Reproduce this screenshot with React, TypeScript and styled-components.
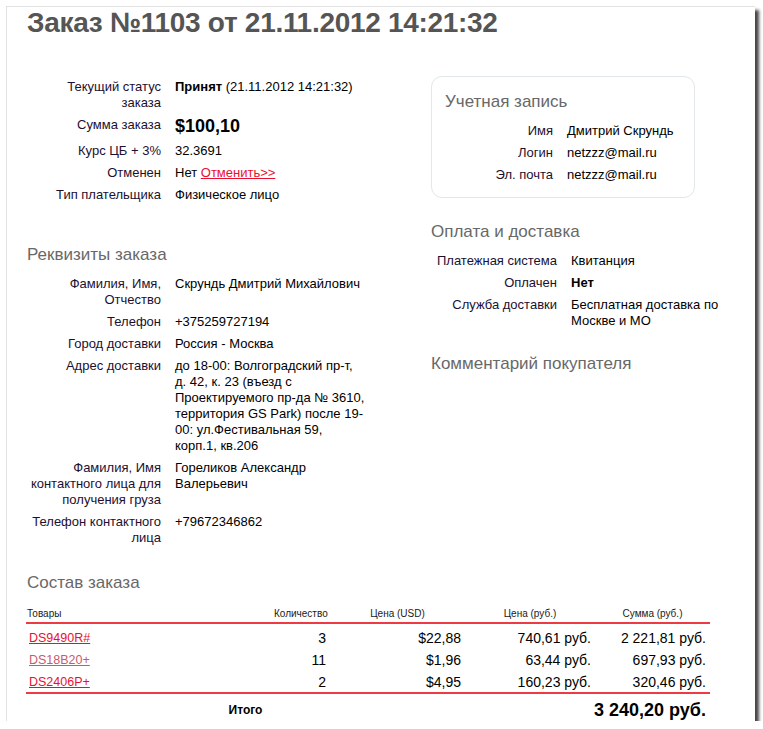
import React from "react";
import styled, { createGlobalStyle } from "styled-components";

const GlobalStyle = createGlobalStyle`
  html, body { margin: 0; padding: 0; background: #fff; }
  body { font-family: "Liberation Sans", Arial, sans-serif; color: #000; }
`;

const Frame = styled.div`
  margin: 6px 0 0 6px;
  width: 749px;
  height: 715px;
  box-sizing: border-box;
  background: #fff;
  border-left: 1px solid #e2e2e2;
  border-top: 1px solid #e2e2e2;
  box-shadow: 4px 4px 3px rgba(0, 0, 0, 0.72);
  padding-left: 20px;
  overflow: hidden;
`;

const PageTitle = styled.h1`
  margin: 0;
  font-size: 28px;
  line-height: 32px;
  font-weight: bold;
  letter-spacing: -0.3px;
  color: #555;
`;

const Columns = styled.div`
  display: grid;
  grid-template-columns: 404px 1fr;
  align-items: start;
  margin-top: 37px;
`;

const Column = styled.div`
  display: flex;
  flex-direction: column;
  align-items: flex-start;
`;

const SectionTitle = styled.h2<{ $top?: number }>`
  margin: ${(p) => p.$top ?? 0}px 0 8px;
  font-size: 17px;
  line-height: 20px;
  font-weight: normal;
  color: #686868;
`;

const InfoList = styled.div<{ $label: number; $value: number; $indent?: number }>`
  display: grid;
  grid-template-columns: ${(p) => p.$label}px ${(p) => p.$value}px;
  column-gap: 14px;
  margin-left: ${(p) => p.$indent ?? 0}px;
  font-size: 13px;
  line-height: 16px;
`;

const Label = styled.div`
  padding: 3px 0;
  text-align: right;
  color: #1c1030;
`;

const Value = styled.div<{ $big?: boolean }>`
  padding: ${(p) => (p.$big ? "3px 0 5px" : "3px 0")};
  color: #000;
  font-size: ${(p) => (p.$big ? "18px" : "inherit")};
  line-height: ${(p) => (p.$big ? "18px" : "inherit")};
  font-weight: ${(p) => (p.$big ? "bold" : "normal")};
`;

const RedLink = styled.a<{ $visited?: boolean }>`
  color: ${(p) => (p.$visited ? "#c75a6e" : "#e8102f")};
  text-decoration: underline;
  cursor: pointer;
`;

const AccountBox = styled.div`
  width: 264px;
  box-sizing: border-box;
  border: 1px solid #e2e7e9;
  border-radius: 11px;
  padding: 15px 14px 11px 13px;
`;

const OrderSection = styled.div`
  margin-top: 24px;
`;

const Table = styled.table`
  margin: 10px 0 0 -1px;
  border-collapse: collapse;
  table-layout: fixed;
  width: 684px;
`;

const HeadCell = styled.th<{ $left?: boolean }>`
  padding: 5px 4px 2px ${(p) => (p.$left ? "1px" : "4px")};
  font-size: 10px;
  line-height: 12px;
  font-weight: normal;
  color: #1a1a1a;
  text-align: ${(p) => (p.$left ? "left" : "center")};
  border-bottom: 2px solid #ee3a43;
`;

const BodyRow = styled.tr`
  &:first-child td { padding-top: 6px; }
  &:last-child td { padding-bottom: 2px; border-bottom: 2px solid #ee3a43; }
`;

const Cell = styled.td<{ $left?: boolean }>`
  padding: 3px 4px 3px ${(p) => (p.$left ? "3px" : "4px")};
  font-size: ${(p) => (p.$left ? "12.5px" : "14px")};
  line-height: 16px;
  text-align: ${(p) => (p.$left ? "left" : "right")};
  color: #000;
  white-space: nowrap;
`;

const TotalLabel = styled.td`
  padding: 6px 4px 0;
  font-size: 12px;
  line-height: 20px;
  font-weight: bold;
  text-align: center;
`;

const TotalValue = styled.td`
  padding: 6px 4px 0;
  font-size: 18px;
  line-height: 20px;
  font-weight: bold;
  text-align: right;
`;

const items = [
  { name: "DS9490R#", qty: "3", usd: "$22,88", rub: "740,61 руб.", sum: "2 221,81 руб.", visited: false },
  { name: "DS18B20+", qty: "11", usd: "$1,96", rub: "63,44 руб.", sum: "697,93 руб.", visited: true },
  { name: "DS2406P+", qty: "2", usd: "$4,95", rub: "160,23 руб.", sum: "320,46 руб.", visited: false },
];

const addressLines = [
  "до 18-00: Волгоградский пр-т,",
  "д. 42, к. 23 (въезд с",
  "Проектируемого пр-да № 3610,",
  "территория GS Park) после 19-",
  "00: ул.Фестивальная 59,",
  "корп.1, кв.206",
];

export default function App() {
  return (
    <>
      <GlobalStyle />
      <Frame>
        <PageTitle>Заказ №1103 от 21.11.2012 14:21:32</PageTitle>
        <Columns>
          <Column>
            <InfoList $label={133} $value={210} $indent={1}>
              <Label>Текущий статус заказа</Label>
              <Value>
                <b>Принят</b> (21.11.2012 14:21:32)
              </Value>
              <Label>Сумма заказа</Label>
              <Value $big>$100,10</Value>
              <Label>Курс ЦБ + 3%</Label>
              <Value>32.3691</Value>
              <Label>Отменен</Label>
              <Value>
                Нет <RedLink>Отменить&gt;&gt;</RedLink>
              </Value>
              <Label>Тип плательщика</Label>
              <Value>Физическое лицо</Value>
            </InfoList>

            <SectionTitle $top={39}>Реквизиты заказа</SectionTitle>
            <InfoList $label={133} $value={210} $indent={1}>
              <Label>Фамилия, Имя, Отчество</Label>
              <Value>Скрундь Дмитрий Михайлович</Value>
              <Label>Телефон</Label>
              <Value>+375259727194</Value>
              <Label>Город доставки</Label>
              <Value>Россия - Москва</Value>
              <Label>Адрес доставки</Label>
              <Value>
                {addressLines.map((line, i) => (
                  <React.Fragment key={i}>
                    {line}
                    {i < addressLines.length - 1 && <br />}
                  </React.Fragment>
                ))}
              </Value>
              <Label>Фамилия, Имя контактного лица для получения груза</Label>
              <Value>
                Гореликов Александр
                <br />
                Валерьевич
              </Value>
              <Label>Телефон контактного лица</Label>
              <Value>+79672346862</Value>
            </InfoList>
          </Column>

          <Column>
            <AccountBox>
              <SectionTitle>Учетная запись</SectionTitle>
              <InfoList $label={108} $value={130}>
                <Label>Имя</Label>
                <Value>Дмитрий Скрундь</Value>
                <Label>Логин</Label>
                <Value>netzzz@mail.ru</Value>
                <Label>Эл. почта</Label>
                <Value>netzzz@mail.ru</Value>
              </InfoList>
            </AccountBox>

            <SectionTitle $top={24}>Оплата и доставка</SectionTitle>
            <InfoList $label={126} $value={165}>
              <Label>Платежная система</Label>
              <Value>Квитанция</Value>
              <Label>Оплачен</Label>
              <Value>
                <b>Нет</b>
              </Value>
              <Label>Служба доставки</Label>
              <Value>Бесплатная доставка по Москве и МО</Value>
            </InfoList>

            <SectionTitle $top={22}>Комментарий покупателя</SectionTitle>
          </Column>
        </Columns>

        <OrderSection>
          <SectionTitle>Состав заказа</SectionTitle>
          <Table>
            <colgroup>
              <col style={{ width: 244 }} />
              <col style={{ width: 60 }} />
              <col style={{ width: 135 }} />
              <col style={{ width: 130 }} />
              <col style={{ width: 115 }} />
            </colgroup>
            <thead>
              <tr>
                <HeadCell $left>Товары</HeadCell>
                <HeadCell>Количество</HeadCell>
                <HeadCell>Цена (USD)</HeadCell>
                <HeadCell>Цена (руб.)</HeadCell>
                <HeadCell>Сумма (руб.)</HeadCell>
              </tr>
            </thead>
            <tbody>
              {items.map((it) => (
                <BodyRow key={it.name}>
                  <Cell $left>
                    <RedLink $visited={it.visited}>{it.name}</RedLink>
                  </Cell>
                  <Cell>{it.qty}</Cell>
                  <Cell>{it.usd}</Cell>
                  <Cell>{it.rub}</Cell>
                  <Cell>{it.sum}</Cell>
                </BodyRow>
              ))}
            </tbody>
            <tfoot>
              <tr>
                <TotalLabel colSpan={3}>Итого</TotalLabel>
                <TotalValue colSpan={2}>3 240,20 руб.</TotalValue>
              </tr>
            </tfoot>
          </Table>
        </OrderSection>
      </Frame>
    </>
  );
}
